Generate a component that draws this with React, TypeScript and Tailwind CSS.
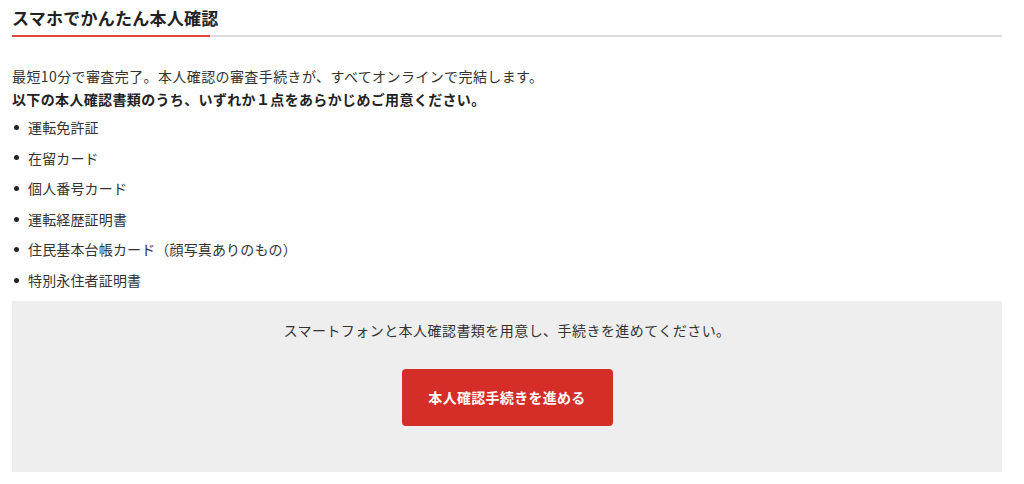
import React from "react";

const items = [
  "運転免許証",
  "在留カード",
  "個人番号カード",
  "運転経歴証明書",
  "住民基本台帳カード（顔写真ありのもの）",
  "特別永住者証明書",
];

export default function App() {
  return (
    <div
      className="w-[1024px] h-[484px] bg-white text-[#333333]"
      style={{ fontFamily: '"Noto Sans CJK JP", "Noto Sans", sans-serif' }}
    >
      <div className="ml-[12px] w-[990px] pt-[5px]">
        <h2 className="text-[17px] leading-[26px] font-bold text-[#222222] tracking-[0.25px]">
          スマホでかんたん本人確認
        </h2>
        <div className="mt-[4px] h-[2px] bg-[#dddddd] flex">
          <div className="w-[198px] h-[2px] bg-[#e0453e]" />
        </div>
        <div className="mt-[28px] text-[14px] leading-[23px] tracking-[0.4px]">
          <p>最短10分で審査完了。本人確認の審査手続きが、すべてオンラインで完結します。</p>
          <p className="font-bold text-[#222222] tracking-[0.35px]">
            以下の本人確認書類のうち、いずれか１点をあらかじめご用意ください。
          </p>
        </div>
        <ul className="mt-[5px] flex flex-col gap-[8px] text-[14px] leading-[22.6px] tracking-[0.15px]">
          {items.map((t) => (
            <li key={t} className="flex items-center">
              <span className="ml-[2px] w-[5px] h-[5px] rounded-full bg-[#222222]" />
              <span className="ml-[9px]">{t}</span>
            </li>
          ))}
        </ul>
        <div className="mt-[9px] h-[171px] bg-[#eeeeee] flex flex-col items-center pt-[18px]">
          <p className="text-[14px] leading-[23px] tracking-[0.45px]">
            スマートフォンと本人確認書類を用意し、手続きを進めてください。
          </p>
          <button className="mt-[27px] w-[211px] h-[57px] rounded-[4px] bg-[#d52d27] text-white text-[14px] font-bold tracking-[0.3px]">
            本人確認手続きを進める
          </button>
        </div>
      </div>
    </div>
  );
}
